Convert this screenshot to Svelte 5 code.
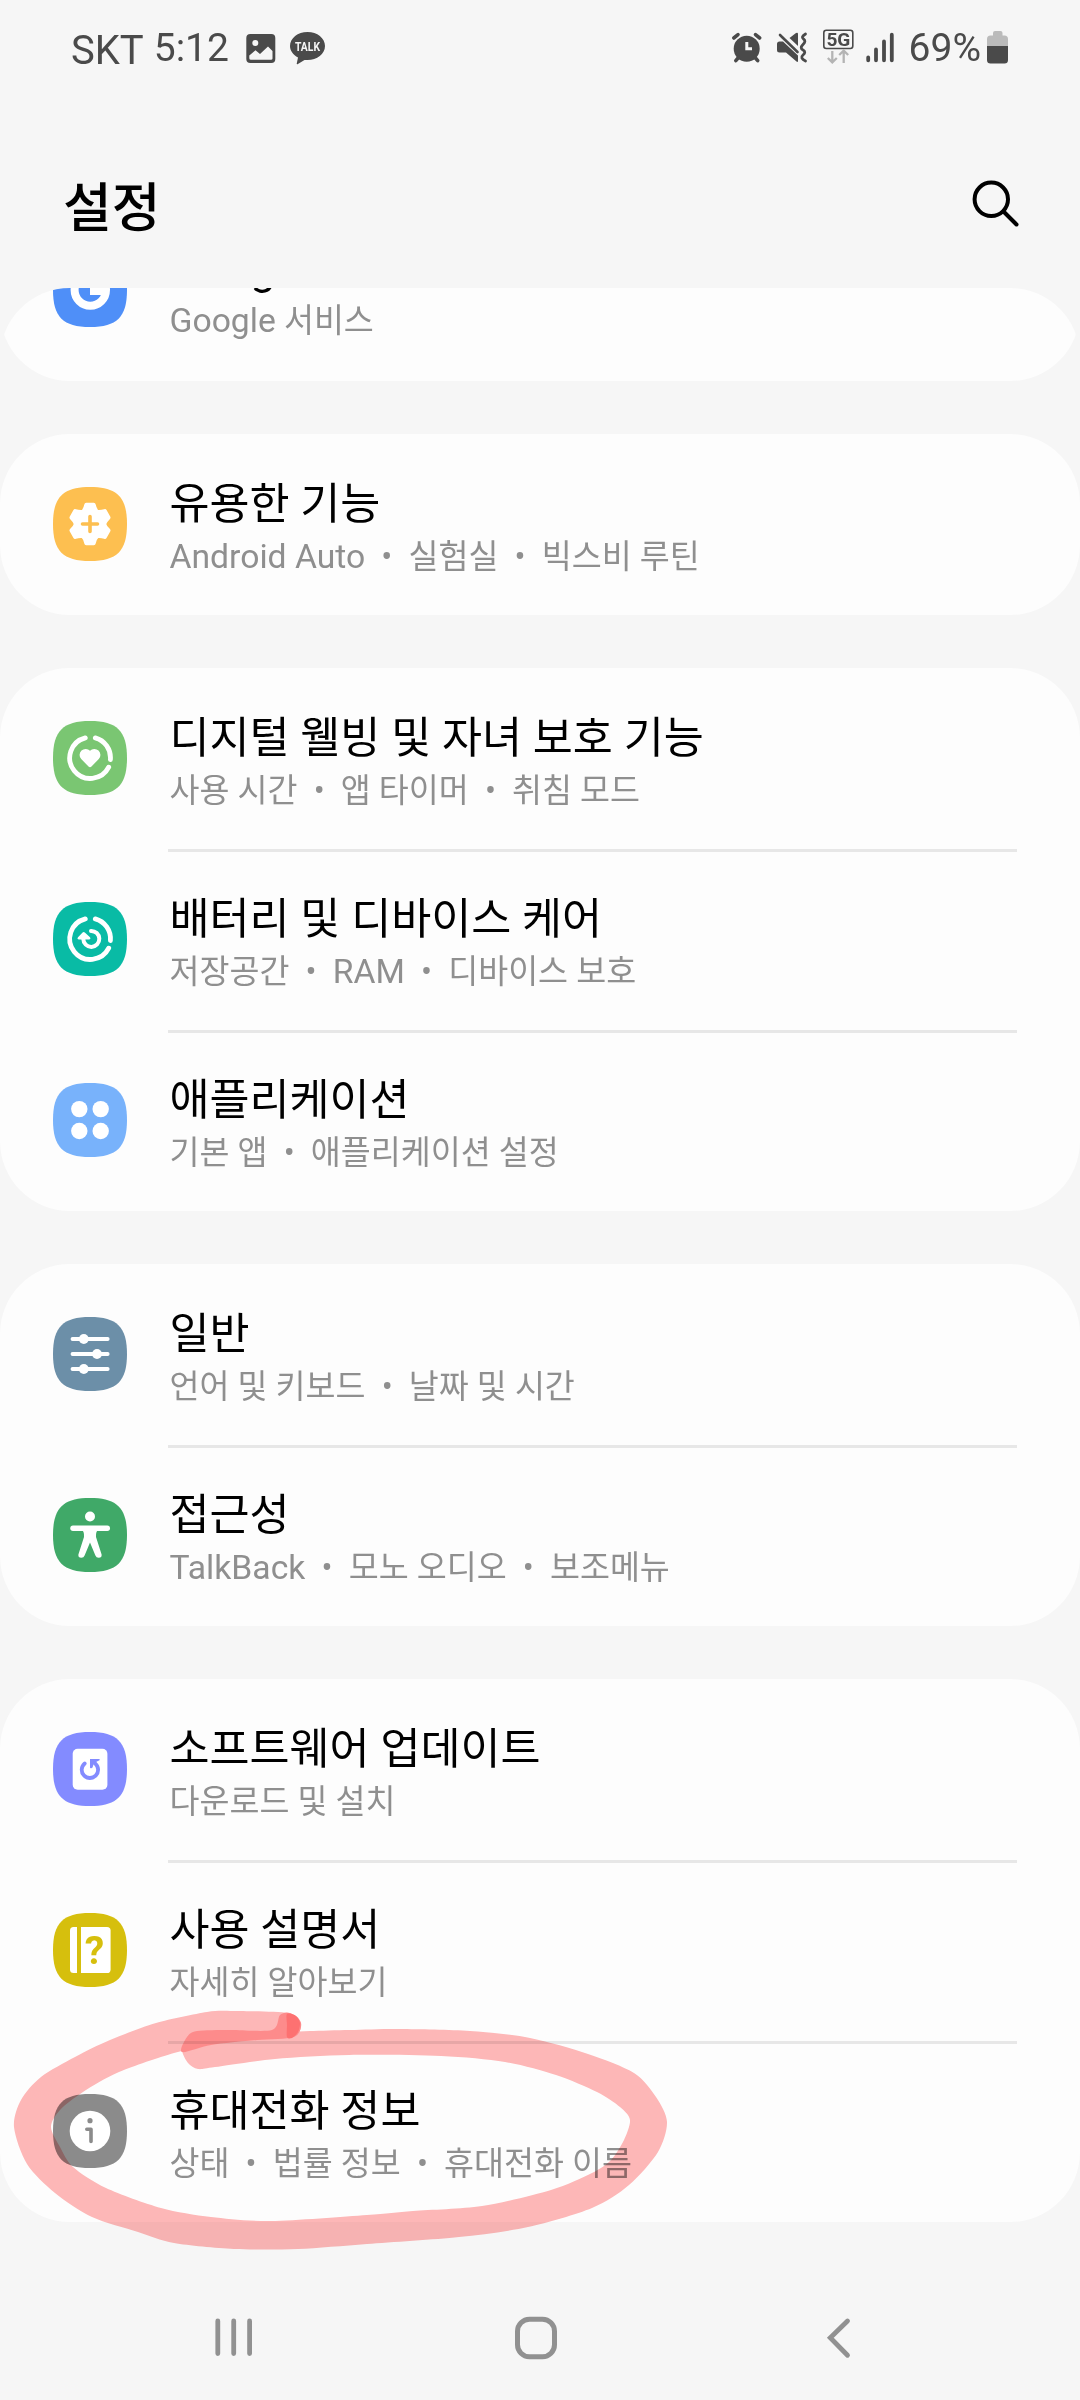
<script>
    const groups = [
        [
            {icon: "google", color: "#4f8ff8", title: "Google", subs: ["Google 서비스"]}
        ],
        [
            {icon: "advanced", color: "#fdbf50", title: "유용한 기능", subs: ["Android Auto", "실험실", "빅스비 루틴"]}
        ],
        [
            {icon: "wellbeing", color: "#7ac672", title: "디지털 웰빙 및 자녀 보호 기능", subs: ["사용 시간", "앱 타이머", "취침 모드"]},
            {icon: "care", color: "#09bba5", title: "배터리 및 디바이스 케어", subs: ["저장공간", "RAM", "디바이스 보호"]},
            {icon: "apps", color: "#78b2fb", title: "애플리케이션", subs: ["기본 앱", "애플리케이션 설정"]}
        ],
        [
            {icon: "general", color: "#6c8fa8", title: "일반", subs: ["언어 및 키보드", "날짜 및 시간"]},
            {icon: "accessibility", color: "#40a968", title: "접근성", subs: ["TalkBack", "모노 오디오", "보조메뉴"]}
        ],
        [
            {icon: "software", color: "#838bff", title: "소프트웨어 업데이트", subs: ["다운로드 및 설치"]},
            {icon: "manual", color: "#d6bf0d", title: "사용 설명서", subs: ["자세히 알아보기"]},
            {icon: "info", color: "#8b8b8b", title: "휴대전화 정보", subs: ["상태", "법률 정보", "휴대전화 이름"]}
        ]
    ]

    // marker stroke, traced as one outline: outer edge first, then back along the inner edge
    const marker = [
        [197, 2031], [215, 2030], [250, 2029], [286, 2032], [310, 2031], [350, 2030], [400, 2029], [470, 2031], [530, 2038], [588, 2054], [634, 2073], [656, 2097], [667, 2122], [658, 2152], [629, 2185],
        [592, 2208], [528, 2227], [459, 2237], [367, 2244], [298, 2249], [234, 2249], [174, 2243], [138, 2232], [92, 2217], [55, 2193],
        [27, 2164], [14, 2127], [21, 2100], [41, 2077], [75, 2057], [110, 2040], [156, 2023], [207, 2012], [234, 2011], [288, 2013], [301, 2023],
        [294, 2037], [257, 2040], [211, 2045], [174, 2053], [119, 2072], [83, 2092], [60, 2110], [51, 2127], [60, 2147], [73, 2167],
        [106, 2188], [161, 2208], [211, 2217], [271, 2221], [367, 2215], [413, 2211], [482, 2206], [551, 2190], [592, 2173], [611, 2160],
        [624, 2140], [630, 2120], [620, 2107], [597, 2092], [556, 2075], [505, 2062], [441, 2056], [349, 2055], [275, 2059], [215, 2067], [198, 2069],
        [188, 2063], [182, 2050], [187, 2037]
    ]
    const overlap = [
        [197, 2031], [230, 2030], [272, 2030], [280, 2015], [290, 2013], [301, 2023], [294, 2037], [257, 2040], [211, 2045], [182, 2052], [187, 2037]
    ]
    const tip = [
        [287, 2014], [296, 2016], [300, 2023], [298, 2032], [292, 2038], [287, 2037], [287, 2025]
    ]

    function smooth(points) {
        const n = points.length
        let d = `M${points[0]}`
        for (let i = 0; i < n; i++) {
            const p0 = points[(i - 1 + n) % n]
            const p1 = points[i]
            const p2 = points[(i + 1) % n]
            const p3 = points[(i + 2) % n]
            d += `C${p1[0] + (p2[0] - p0[0]) / 7} ${p1[1] + (p2[1] - p0[1]) / 7} ${p2[0] - (p3[0] - p1[0]) / 7} ${p2[1] - (p3[1] - p1[1]) / 7} ${p2[0]} ${p2[1]}`
        }
        return d + "Z"
    }

    // latin words are set slightly larger than the hangul around them
    function words(subs) {
        return subs.join("  •  ").split(/([A-Za-z]+(?: [A-Za-z]+)*)/).filter(Boolean)
    }
</script>

<div class="screen">
    <header class="status">
        <span class="carrier">SKT</span>
        <span class="time">5:12</span>
        <svg class="picture" width="30" height="36" viewBox="0 0 30 36">
            <rect x="0.3" y="4" width="29" height="29" rx="4" fill="#4a4a4a" />
            <circle cx="9.3" cy="13" r="3" fill="#f6f6f6" />
            <path d="M3.3 25.5L9.5 20.3L14 24L22 16.5L26.5 21V28.5Q26.5 29.8 25 29.8H5Q3.3 29.8 3.3 28.3Z" fill="#f6f6f6" />
        </svg>
        <svg class="talk" width="36" height="36" viewBox="0 0 36 36">
            <path d="M17.5 2C27.3 2 35 8.2 35 16C35 24 27 30 17.5 30L14.5 29.9L7.5 34.2Q6.4 34.6 6.8 33.2L8 27.4C3.2 25 0 20.8 0 16C0 8.2 7.8 2 17.5 2Z" fill="#4a4a4a" />
            <text x="17.5" y="21" text-anchor="middle" textLength="25" lengthAdjust="spacingAndGlyphs" class="talk_text">TALK</text>
        </svg>
        <div class="indicators">
            <svg width="30" height="36" viewBox="0 0 30 36" fill="none" stroke="#4a4a4a" stroke-linecap="round">
                <circle cx="14.7" cy="18.8" r="13" fill="#4a4a4a" stroke="none" />
                <path d="M6.5 27.5L3.8 30.7M23 27.5L25.7 30.7" stroke-width="3.6" />
                <path d="M1.8 8L6 4.7M27.7 8L23.5 4.7" stroke-width="3.6" />
                <path d="M14.8 12V18.7H20" stroke="#f6f6f6" stroke-width="3" stroke-linecap="butt" />
            </svg>
            <svg class="mute" width="31" height="36" viewBox="0 0 31 36">
                <path d="M0 14Q0 11.5 2.5 11.5H6L21 25.5V31Q21 32.6 19.5 31.5L9 22.5H2.5Q0 22.5 0 20Z" fill="#4a4a4a" />
                <path d="M12.5 8L19 3Q21 2 21 4V16Z" fill="#4a4a4a" />
                <path d="M3 5L20.5 22" stroke="#4a4a4a" stroke-width="2.6" stroke-linecap="round" />
                <path d="M28.5 4Q23.5 7 26.5 9T26 14.5T26 20T26 25T28.5 31" fill="none" stroke="#4a4a4a" stroke-width="2.8" stroke-linecap="round" />
            </svg>
            <svg class="network" width="32" height="36" viewBox="0 0 32 36">
                <rect x="0.8" y="0.2" width="29" height="18.3" rx="2.5" fill="none" stroke="#4a4a4a" stroke-width="1.6" />
                <text x="15.4" y="16" text-anchor="middle" textLength="24" lengthAdjust="spacingAndGlyphs" class="network_text">5G</text>
                <path d="M9.3 21V32M4.8 28L9.3 32.3L13.8 28M20.7 33V21M16.2 25L20.7 20.7L25.2 25" fill="none" stroke="#b4b4b4" stroke-width="2.3" />
            </svg>
            <svg class="signal" width="28" height="36" viewBox="0 0 28 36" stroke="#4a4a4a" stroke-width="3.8" stroke-linecap="round">
                <path d="M2.2 27.5V30.3M10 19.5V30.3M18 11.5V30.3M25.8 4.7V30.3" />
            </svg>
            <span class="percent">69%</span>
            <svg class="battery" width="21" height="36" viewBox="0 0 21 36">
                <path d="M0 16V9Q0 5.5 3.5 5.5H6V3Q6 1 8 1H13.5Q15.5 1 15.5 3V5.5H17.5Q21 5.5 21 9V16Z" fill="#bbb" />
                <path d="M0 16H21V30Q21 33.5 17.5 33.5H3.5Q0 33.5 0 30Z" fill="#4a4a4a" />
            </svg>
        </div>
    </header>

    <div class="titlebar">
        <h1>설정</h1>
        <svg width="50" height="50" viewBox="0 0 50 50" fill="none" stroke="#000" stroke-width="4" stroke-linecap="round">
            <circle cx="21.3" cy="20.3" r="16.7" />
            <path d="M33.5 32.5L46.5 45.5" />
        </svg>
    </div>

    <main class="list">
        {#each groups as group}
            <ul class="card">
                {#each group as item}
                    <li class="row">
                        <svg class="icon" width="74" height="74" viewBox="0 0 74 74" fill="#fff">
                            <path d="M37 0C64 0 74 10 74 37S64 74 37 74S0 64 0 37S10 0 37 0Z" fill={item.color} />
                            {#if item.icon === "google"}
                                <circle cx="37.3" cy="37" r="15.7" fill="none" stroke="#fff" stroke-width="8" />
                                <path d="M37 33H56V42H37Z" />
                            {:else if item.icon === "advanced"}
                                <circle cx="37" cy="37" r="16" />
                                {#each [0, 60, 120, 180, 240, 300] as angle}
                                    <path d="M27.5 25Q30.5 21.5 31.3 17.5Q31.6 15.7 33.2 15.7H40.8Q42.4 15.7 42.7 17.5Q43.5 21.5 46.5 25Z" transform="rotate({angle} 37 37)" />
                                {/each}
                                <path d="M37 29.5V44.5M29.5 37H44.5" stroke={item.color} stroke-width="3.6" stroke-linecap="round" />
                            {:else if item.icon === "wellbeing"}
                                <path d="M32.3 16.9A20.6 20.6 0 1 0 55.7 46.2M42.3 16.9A20.6 20.6 0 0 1 57.4 38.5" fill="none" stroke="#fff" stroke-width="4.8" stroke-linecap="round" />
                                <path d="M35.5 45.5L28.2 38A6 6 0 0 1 37 29.8A6 6 0 0 1 45.8 38L38.5 45.5Q37 47 35.5 45.5Z" />
                            {:else if item.icon === "care"}
                                <path d="M32.3 16.9A20.6 20.6 0 1 0 55.7 46.2M42.3 16.9A20.6 20.6 0 0 1 57.4 38.5" fill="none" stroke="#fff" stroke-width="4.8" stroke-linecap="round" />
                                <path d="M38 28.9A8 8 0 1 1 30.3 37V34" fill="none" stroke="#fff" stroke-width="4" stroke-linecap="round" />
                                <path d="M25 35.3L29.6 30.6Q30.7 29.6 31.8 30.6L37 35.3Q38.2 37.3 36 37.6H26Q23.6 37.3 25 35.3Z" />
                            {:else if item.icon === "apps"}
                                <circle cx="26.3" cy="26.1" r="8.2" />
                                <circle cx="47.7" cy="26.1" r="8.2" />
                                <circle cx="26.3" cy="48" r="8.2" />
                                <circle cx="47.7" cy="48" r="8.2" />
                            {:else if item.icon === "general"}
                                <path d="M19.5 22H54.7M19.5 37H54.7M19.5 52H54.7" stroke="#fff" stroke-width="3.8" stroke-linecap="round" />
                                <circle cx="30.8" cy="22" r="4.9" />
                                <circle cx="44" cy="37" r="4.9" />
                                <circle cx="30.8" cy="52" r="4.9" />
                            {:else if item.icon === "accessibility"}
                                <circle cx="37" cy="18.5" r="5" />
                                <path d="M20 30.3H54.3" stroke="#fff" stroke-width="5.4" stroke-linecap="round" />
                                <path d="M28 31Q31.5 33 31 39L25.4 56.5Q25 59.7 28.3 59.7Q30.8 59.7 31.6 57.5L37 44.5L42.4 57.5Q43.2 59.7 45.7 59.7Q49 59.7 48.6 56.5L43 39Q42.5 33 46 31Z" />
                            {:else if item.icon === "software"}
                                <rect x="19.7" y="16.7" width="34.7" height="41" rx="5" />
                                <path d="M31.7 31.5A8.2 8.2 0 1 0 42.5 31.8L39 29" fill="none" stroke={item.color} stroke-width="3.8" stroke-linecap="round" />
                                <path d="M37 27H46Q47.3 27 46.5 28.3L41 31L39.5 35.5Q38.5 37 37 35.8Z" fill={item.color} />
                            {:else if item.icon === "manual"}
                                <path d="M24 14V60H20.5Q17 60 17 56.5V17.5Q17 14 20.5 14Z" />
                                <path d="M28 14H54Q57.6 14 57.6 17.6V56.4Q57.6 60 54 60H28Z" />
                                <text x="41.5" y="51" text-anchor="middle" class="mark" fill={item.color}>?</text>
                            {:else}
                                <circle cx="37" cy="37" r="20.3" />
                                <circle cx="37" cy="26.7" r="2.6" fill={item.color} />
                                <path d="M33.8 35.2H38V47.5" fill="none" stroke={item.color} stroke-width="3.6" stroke-linecap="round" stroke-linejoin="round" />
                            {/if}
                        </svg>
                        <div class="body">
                            <div class="name" class:latin_name={item.title === "Google"}>{item.title}</div>
                            <div class="sub">{#each words(item.subs) as word}<span class:latin={/[A-Z]/.test(word)}>{word}</span>{/each}</div>
                        </div>
                    </li>
                {/each}
            </ul>
        {/each}
    </main>

    <nav>
        <svg width="44" height="44" viewBox="0 0 44 44" stroke="#919191" stroke-width="4.8" stroke-linecap="round">
            <path d="M5.8 5V37.6M21.7 5V37.6M37.6 5V37.6" />
        </svg>
        <svg width="44" height="44" viewBox="0 0 44 44">
            <rect x="3.5" y="3.3" width="37" height="37.4" rx="12" fill="none" stroke="#919191" stroke-width="5" />
        </svg>
        <svg width="44" height="44" viewBox="0 0 44 44">
            <path d="M31.5 5L14.3 21.8L31.5 39.2" fill="none" stroke="#919191" stroke-width="4.8" stroke-linecap="round" />
        </svg>
    </nav>

    <svg class="marker" width="1080" height="2400" viewBox="0 0 1080 2400">
        <path d={smooth(marker)} fill="#ffb9b9" />
        <path d={smooth(overlap)} fill="#ff8c8c" />
        <path d={smooth(tip)} fill="#ff7272" />
    </svg>
</div>

<style>
    :global(body) {
        background-color: #f6f6f6;
    }

    .screen {
        position: relative;
        width: 1080px;
        height: 2400px;
        overflow: hidden;
        display: flex;
        flex-direction: column;
        background-color: #f6f6f6;
        font-family: Roboto, "Noto Sans CJK KR", sans-serif;
    }

    svg {
        display: block;
        flex: none;
        overflow: visible;
    }

    .status {
        display: flex;
        align-items: center;
        height: 96px;
        padding: 0 72px 0 71px;
        box-sizing: border-box;
        color: #4a4a4a;
        font-size: 39px;
        line-height: 40px;
    }

    .carrier {
        font-size: 40px;
        margin-top: 5px;
    }

    .time {
        margin-left: 10px;
    }

    .picture {
        margin-left: 17px;
    }

    .talk {
        margin-left: 14px;
    }

    .talk_text {
        font-size: 12.5px;
        font-weight: 700;
        fill: #f6f6f6;
    }

    .indicators {
        display: flex;
        align-items: center;
        margin-left: auto;
    }

    .mute {
        margin-left: 15px;
    }

    .network {
        margin-left: 15px;
    }

    .network_text {
        font-size: 19px;
        font-weight: 700;
        fill: #4a4a4a;
    }

    .signal {
        margin-left: 11px;
    }

    .percent {
        margin-left: 15px;
    }

    .battery {
        margin-left: 6px;
    }

    .titlebar {
        display: flex;
        align-items: flex-start;
        justify-content: space-between;
        height: 192px;
        padding: 83px 60px 0 63px;
        box-sizing: border-box;
    }

    h1 {
        margin: -8px 0 0;
        font-size: 53px;
        font-weight: 500;
        line-height: 76px;
    }

    .list {
        height: 1980px;
        overflow: hidden;
        border-radius: 70px 70px 0 0;
    }

    .card {
        margin: 0 0 53px;
        padding: 0;
        list-style: none;
        border-radius: 70px;
        background-color: #fdfdfd;
    }

    /* first card is scrolled halfway under the title bar */
    .card:first-child {
        margin-top: -88px;
    }

    .row {
        display: flex;
        align-items: flex-start;
        height: 181px;
        padding: 0 63px 0 53px;
    }

    .icon {
        margin-top: 53px;
    }

    .body {
        align-self: stretch;
        flex: 1;
        margin-left: 41px;
        padding: 42px 0 0 1.5px;
        border-top: 3px solid transparent;
    }

    .row + .row .body {
        border-top-color: #e7e7e7;
    }

    .name {
        font-size: 43.5px;
        line-height: 52px;
        color: #000;
    }

    .latin_name {
        margin: -2px 0 2px;
        font-size: 44.5px;
    }

    .sub {
        margin-top: 4px;
        font-size: 32.6px;
        line-height: 44px;
        color: #8f8f8f;
        white-space: pre;
    }

    .latin {
        font-size: 33.7px;
    }

    .mark {
        font-size: 39px;
        font-weight: 700;
    }

    nav {
        display: flex;
        justify-content: space-between;
        padding: 48px 220px 0 212px;
    }

    .marker {
        position: absolute;
        top: 0;
        left: 0;
        pointer-events: none;
        mix-blend-mode: multiply;
    }
</style>
